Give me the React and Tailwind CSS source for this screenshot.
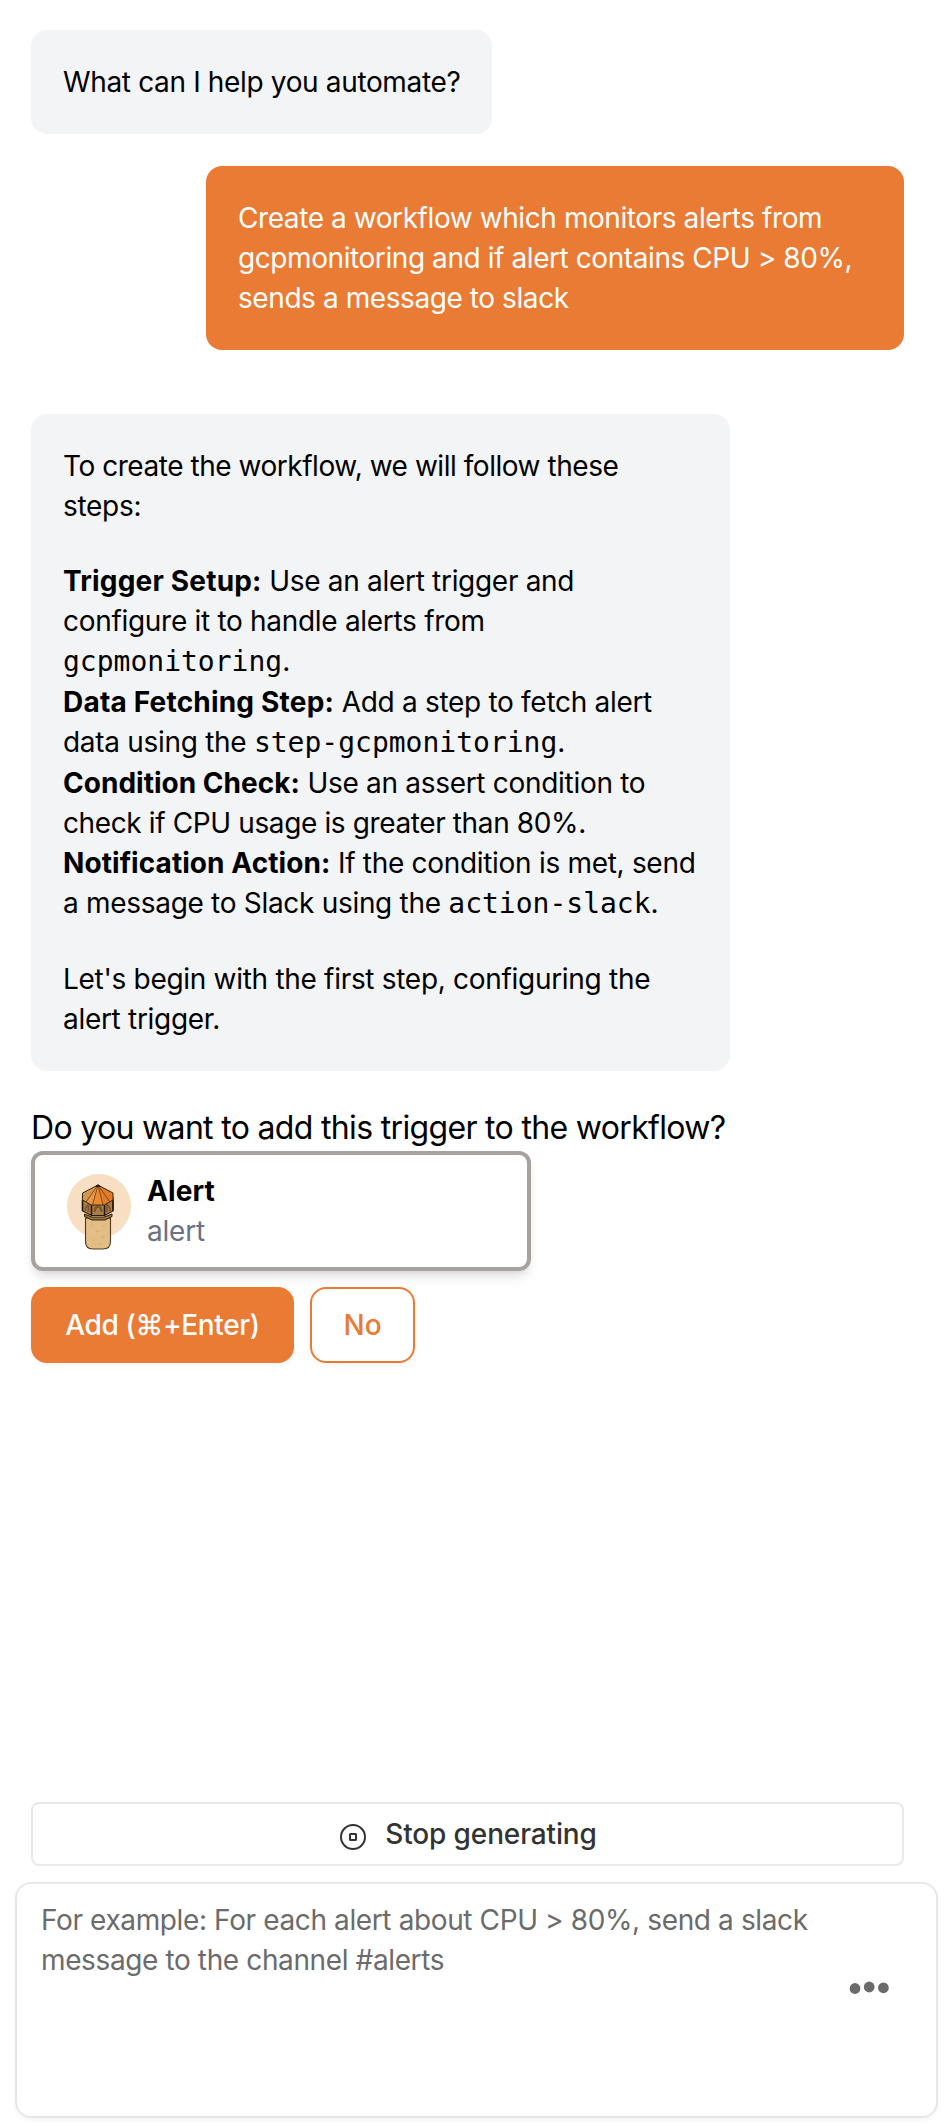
import React from "react";

function Tower() {
  return (
    <svg width="66" height="80" viewBox="0 0 66 80" className="mt-[5px] shrink-0">
      <circle cx="32" cy="32" r="32" fill="#f8dfc3" />
      <path d="M18.500 44V67.500Q18.500 75 26 75H36Q43.500 75 43.500 67.500V44Z" fill="#e2bd84" stroke="#4a3825" strokeWidth="1.100" />
      <path d="M29 57h3M35 52h3M26 66h2M31 70h3M24 50h2M34 63h3" stroke="#dbae7a" strokeWidth="1.500" />
      <path d="M17.500 40V42.500L25 46H38L45 42.500V40L37 43H25Z" fill="#9a6e3a" stroke="#33230f" strokeWidth="1" />
      <path d="M15.500 24V37L24.500 41.500H37.500L46 37V24L37.500 29H24.500Z" fill="#ac7d47" stroke="#2b1c0e" strokeWidth="1.100" />
      <path d="M18.500 37V34L21.500 30.500V38M43 37V34L40 30.500V38" stroke="#7d5630" strokeWidth="1.800" fill="none" />
      <path d="M27.500 38Q28 32.500 31 32.500T34.500 38" stroke="#7d5630" strokeWidth="2.400" fill="none" />
      <path d="M24.500 30V41.500M37.500 30V41.500M15.500 26V37M46 26V37" stroke="#20150b" strokeWidth="1.500" />
      <path d="M31 11 15.500 19V26L24.500 31H37.500L46 26V19Z" fill="#e88a31" />
      <path d="M31 11 15.500 19V26L19 28Z" fill="#cf9750" />
      <path d="M31 11 19 28 24.500 31Z" fill="#e69a48" />
      <path d="M31 11 36 31H37.500L46 26V19Z" fill="#df7c2b" />
      <path d="M31 11 19 28M31 11 25.500 31M31 11 36 31M31 11 43 28" stroke="#7a4316" strokeWidth="0.900" />
      <path d="M31 11 15.500 19V26L24.500 31H37.500L46 26V19Z" fill="none" stroke="#3c260f" strokeWidth="1" />
      <path d="M28 12.800 31 10.300 34 12.800Z" fill="#21160b" />
    </svg>
  );
}

function Mono({ children }) {
  return <code className="font-['DejaVu_Sans_Mono',monospace] text-[28px] tracking-normal">{children}</code>;
}

export default function App() {
  return (
    <div className="flex h-[2126px] w-[950px] flex-col bg-white pt-[30px] font-[Inter,sans-serif] text-[28px] leading-[40px] text-black antialiased">
      <main className="ml-[31px] flex w-[873px] flex-col items-start whitespace-nowrap">
        <div className="w-[461px] rounded-[16px] bg-gray-100 p-8 tracking-[-0.35px]">What can I help you automate?</div>
        <div className="mt-8 w-[698px] self-end rounded-[16px] bg-[#ea7b34] p-8 tracking-[-0.42px] text-white">
          Create a workflow which monitors alerts from<br />
          gcpmonitoring and if alert contains CPU &gt; 80%,<br />
          sends a message to slack
        </div>
        <div className="mt-16 h-[657px] w-[699px] rounded-[16px] bg-gray-100 p-8 tracking-[-0.3px]">
          <p><span className="tracking-[-0.46px]">To create the workflow, we will follow these</span><br />steps:</p>
          <p className="mt-[35px]">
            <b className="tracking-[0.18px]">Trigger Setup:</b> Use an alert trigger and<br />
            configure it to handle alerts from<br />
            <Mono>gcpmonitoring</Mono>.<br />
            <b className="tracking-[0.2px]">Data Fetching Step:</b> Add a step to fetch alert<br />
            data using the <Mono>step-gcpmonitoring</Mono>.<br />
            <b className="tracking-[0.02px]">Condition Check:</b> Use an assert condition to<br />
            <span className="tracking-[-0.38px]">check if CPU usage is greater than 80%.</span><br />
            <b className="tracking-[0.07px]">Notification Action:</b> If the condition is met, send<br />
            a message to Slack using the <Mono>action-slack</Mono>.
          </p>
          <p className="mt-[35px]">Let's begin with the first step, configuring the<br />alert trigger.</p>
        </div>
        <h2 className="mt-[33px] text-[32px] leading-[47px] tracking-[-0.67px]">Do you want to add this trigger to the workflow?</h2>
        <div className="flex h-[120px] w-[500px] items-center rounded-[12px] border-4 border-[#a8a29e] bg-white pl-8 shadow-[0_8px_12px_-2px_rgba(0,0,0,0.1),0_4px_8px_-4px_rgba(0,0,0,0.1)]">
          <Tower />
          <div className="ml-[14px]">
            <div className="font-bold tracking-[0.1px]">Alert</div>
            <div className="tracking-[-0.2px] text-gray-500">alert</div>
          </div>
        </div>
        <div className="mt-4 flex gap-4 font-medium">
          <button className="h-[76px] w-[263px] rounded-[16px] bg-[#ea7b34] tracking-[-0.35px] text-white shadow-[0_2px_4px_rgba(0,0,0,0.05)]">Add (⌘+Enter)</button>
          <button className="h-[76px] w-[105px] rounded-[16px] border-2 border-[#ea7b34] text-[#ea7b34] shadow-[0_2px_4px_rgba(0,0,0,0.05)]">No</button>
        </div>
      </main>
      <footer className="mt-auto flex flex-col pb-2">
        <button className="ml-[31px] flex h-16 w-[873px] items-center justify-center rounded-[8px] border-2 border-[#e9e9e9] pl-[2px] font-medium text-[#333]">
          <svg className="mt-[6px]" width="26" height="26" viewBox="0 0 26 26" fill="none" stroke="#333" strokeWidth="2"><circle cx="13" cy="13" r="12" /><rect x="10" y="10" width="6" height="6" rx="0.500" /></svg>
          <span className="ml-[19px] tracking-[-0.13px]">Stop generating</span>
        </button>
        <div className="mt-4 ml-[15px] flex h-[236px] w-[923px] justify-between rounded-[16px] border-2 border-gray-200 py-[16px] pr-[47px] pl-[24px] tracking-[-0.38px] text-[#6b6b6b] shadow-[0_2px_4px_rgba(0,0,0,0.05)]">
          <p className="whitespace-nowrap">
            For example: For each alert about CPU &gt; 80%, send a slack<br />message to the channel #alerts
          </p>
          <svg className="mt-[80px]" width="40" height="16" viewBox="0 0 40 16" fill="#6b6b6b">
            <circle cx="6" cy="8.500" r="5.400" />
            <circle cx="20.200" cy="7" r="5.400" />
            <circle cx="34.400" cy="7.800" r="5.400" />
          </svg>
        </div>
      </footer>
    </div>
  );
}
